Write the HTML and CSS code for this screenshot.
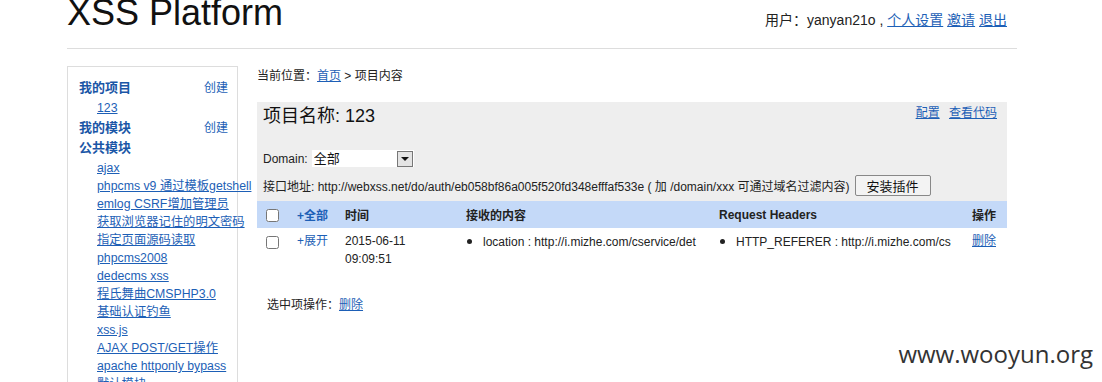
FILE: index.html
```html
<!DOCTYPE html>
<html lang="zh-CN">
<head>
  <meta charset="UTF-8">
  <title>XSS Platform</title>
  <link rel="stylesheet" href="styles.css">
</head>
<body>
  <div class="wrap">
    <header class="top">
      <h1>XSS Platform</h1>
      <div class="user">用户：yanyan21o , <a href="#">个人设置</a> <a href="#">邀请</a> <a href="#">退出</a></div>
    </header>

    <div class="layout">
      <!-- left menu -->
      <aside class="side">
        <div class="side-head"><span>我的项目</span><a href="#" class="create">创建</a></div>
        <ul class="side-list projects">
          <li><a href="#">123</a></li>
        </ul>
        <div class="side-head"><span>我的模块</span><a href="#" class="create">创建</a></div>
        <div class="side-head"><span>公共模块</span></div>
        <ul class="side-list modules">
          <li><a href="#">ajax</a></li>
          <li><a href="#">phpcms v9 通过模板getshell</a></li>
          <li><a href="#">emlog CSRF增加管理员</a></li>
          <li><a href="#">获取浏览器记住的明文密码</a></li>
          <li><a href="#">指定页面源码读取</a></li>
          <li><a href="#">phpcms2008</a></li>
          <li><a href="#">dedecms xss</a></li>
          <li><a href="#">程氏舞曲CMSPHP3.0</a></li>
          <li><a href="#">基础认证钓鱼</a></li>
          <li><a href="#">xss.js</a></li>
          <li><a href="#">AJAX POST/GET操作</a></li>
          <li><a href="#">apache httponly bypass</a></li>
          <li><a href="#">默认模块</a></li>
        </ul>
      </aside>

      <!-- main content -->
      <main class="main">
        <div class="crumb">当前位置：<a href="#">首页</a> &gt; 项目内容</div>

        <div class="panel">
          <div class="title-row">
            <h2>项目名称: 123</h2>
            <div class="title-links"><a href="#">配置</a> <a href="#">查看代码</a></div>
          </div>
          <div class="domain-row">
            <span>Domain:</span>
            <span class="select-box">
              <select><option>全部</option></select>
              <span class="select-btn"></span>
            </span>
          </div>
          <div class="api-row">
            <span>接口地址: http://webxss.net/do/auth/eb058bf86a005f520fd348efffaf533e ( 加 /domain/xxx 可通过域名过滤内容)</span>
            <button class="btn">安装插件</button>
          </div>
        </div>

        <table class="list">
          <thead>
            <tr>
              <th class="c-check"><input type="checkbox"></th>
              <th class="c-open"><a href="#">+全部</a></th>
              <th class="c-time">时间</th>
              <th class="c-content">接收的内容</th>
              <th class="c-head">Request Headers</th>
              <th class="c-op">操作</th>
            </tr>
          </thead>
          <tbody>
            <tr>
              <td><input type="checkbox"></td>
              <td><a href="#">+展开</a></td>
              <td>2015-06-11<br>09:09:51</td>
              <td><div class="clip"><ul><li>location : http://i.mizhe.com/cservice/det</li></ul></div></td>
              <td><div class="clip"><ul><li>HTTP_REFERER : http://i.mizhe.com/cs</li></ul></div></td>
              <td><a href="#">删除</a></td>
            </tr>
          </tbody>
        </table>

        <div class="batch">选中项操作：<a href="#">删除</a></div>
      </main>
    </div>
  </div>

  <div class="watermark">www.wooyun.org</div>
</body>
</html>
```

FILE: styles.css
```css
body {
  margin: 0;
  font-family: 'Liberation Sans', 'Noto Sans CJK SC', sans-serif;
  font-size: 12px;
  color: #222;
  background: #fff;
  overflow: hidden;
}
a {
  color: #1d5fb6;
}
.wrap {
  width: 950px;
  margin-left: 67px;
}
.top {
  display: flex;
  justify-content: space-between;
  align-items: flex-start;
  height: 48px;
  border-bottom: 1px solid #ddd;
}
.top h1 {
  margin: -5px 0 0 0;
  font-size: 36px;
  line-height: 36px;
  font-weight: normal;
  color: #111;
}
.user {
  margin-top: 11px;
  padding-right: 10px;
  font-size: 14px;
  line-height: 18px;
}
.layout {
  display: flex;
  gap: 19px;
  margin-top: 17px;
}
.side {
  width: 169px;
  height: 340px;
  border: 1px solid #ddd;
  padding-top: 11px;
  box-sizing: content-box;
}
.side-head {
  display: flex;
  justify-content: space-between;
  padding: 0 9px 0 11px;
  line-height: 20px;
  font-size: 13px;
  font-weight: bold;
  color: #1a56a6;
}
.side-head .create {
  font-weight: normal;
  font-size: 12px;
  text-decoration: none;
}
.side-list {
  list-style: none;
  margin: 0;
  padding: 0 0 0 29px;
  white-space: nowrap;
}
.side-list li {
  line-height: 18px;
  font-size: 12.3px;
}
.projects li {
  line-height: 20px;
}
.modules {
  margin-top: 1px;
}
.main {
  width: 750px;
}
.crumb {
  padding-top: 1px;
  line-height: 18px;
}
.panel {
  margin-top: 17px;
  background: #eee;
  padding: 2px 10px 4px 6px;
}
.title-row {
  display: flex;
  justify-content: space-between;
  height: 28px;
}
.title-row h2 {
  margin: 0;
  font-size: 18px;
  font-weight: normal;
  line-height: 24px;
  color: #111;
}
.title-links {
  padding-top: 1px;
  line-height: 16px;
}
.title-links a {
  margin-left: 6px;
}
.domain-row {
  display: flex;
  align-items: center;
  gap: 4px;
  margin-top: 17px;
  height: 19px;
}
.select-box {
  position: relative;
  display: inline-block;
  width: 102px;
  height: 17px;
  background: #fff;
}
.select-box select {
  appearance: none;
  border: none;
  background: transparent;
  width: 100%;
  height: 17px;
  padding: 0 0 0 2px;
  font: 13px 'Liberation Sans', 'Noto Sans CJK SC', sans-serif;
  color: #111;
}
.select-btn {
  position: absolute;
  right: 1px;
  top: 1px;
  width: 14px;
  height: 14px;
  border: 1px solid #777;
  background: #e4e4e4;
}
.select-btn::after {
  content: "";
  position: absolute;
  left: 3px;
  top: 5px;
  border-left: 4px solid transparent;
  border-right: 4px solid transparent;
  border-top: 4px solid #111;
}
.api-row {
  display: flex;
  align-items: center;
  gap: 5px;
  margin-top: 6px;
  height: 23px;
}
.btn {
  height: 21px;
  padding: 0 11px;
  font: 13px 'Liberation Sans', 'Noto Sans CJK SC', sans-serif;
  background: #f3f3f3;
  border: 1px solid #888;
  border-radius: 2px;
  color: #111;
}
.list {
  width: 750px;
  border-collapse: collapse;
  table-layout: fixed;
}
.list th {
  height: 27px;
  background: #c4d9f8;
  text-align: left;
  font-weight: bold;
  padding: 0 7px;
}
.list td {
  vertical-align: top;
  padding: 4px 7px 11px;
  line-height: 18px;
}
.list th:first-child,
.list td:first-child {
  padding-left: 9px;
}
.list input {
  margin: 0;
  width: 13px;
  height: 13px;
  vertical-align: middle;
}
.list td input {
  margin-top: 2px;
}
.list th a {
  text-decoration: none;
}
.list td a {
  text-decoration: none;
}
.list td:last-child a {
  text-decoration: underline;
}
.c-check { width: 17px; }
.c-open { width: 34px; }
.c-time { width: 107px; }
.c-content { width: 239px; }
.c-head { width: 239px; }
.c-op { width: 28px; }
.clip {
  overflow: hidden;
  white-space: nowrap;
}
.clip ul {
  margin: 0;
  padding-left: 17px;
}
.clip li::marker {
  font-size: 15px;
}
.batch {
  margin-top: 17px;
  padding-left: 10px;
  line-height: 18px;
}
.watermark {
  position: absolute;
  right: 9px;
  top: 337px;
  font-family: 'Open Sans', sans-serif;
  font-size: 24px;
  color: #333;
}
```
